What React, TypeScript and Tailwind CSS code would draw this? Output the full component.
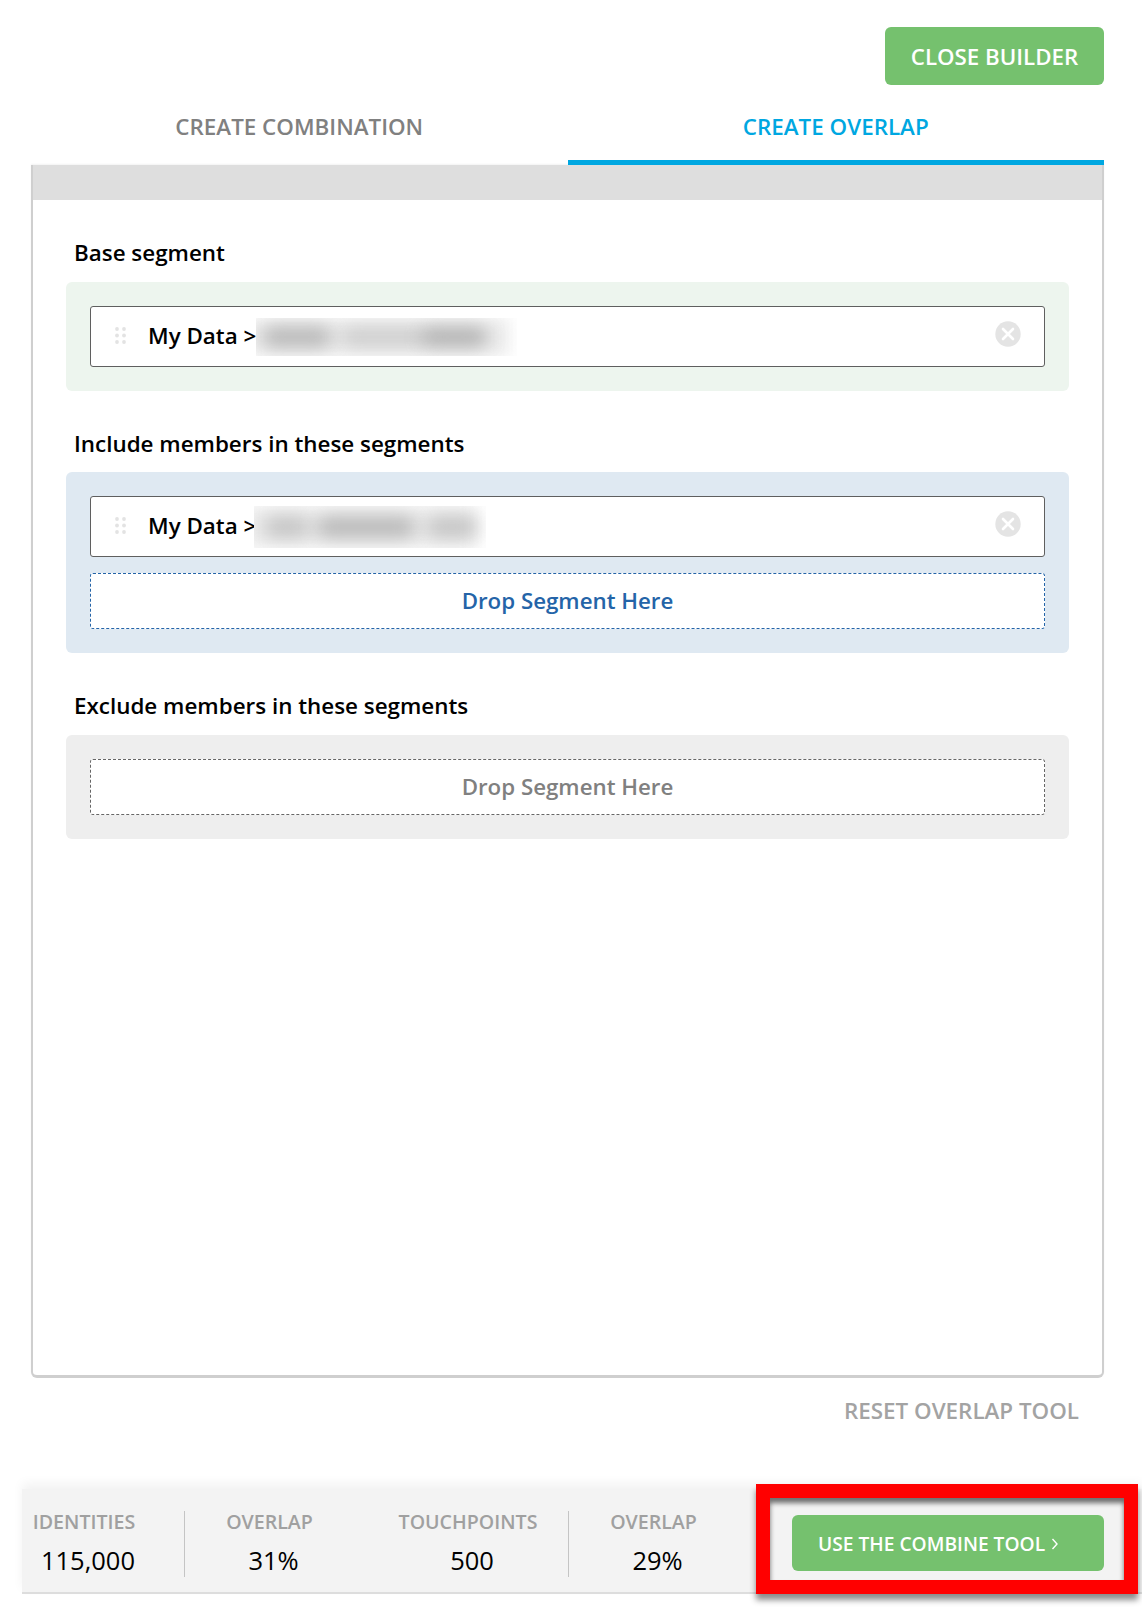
const font = { fontFamily: '"Open Sans", sans-serif' };

function Grip() {
  return (
    <svg width="11" height="17" viewBox="0 0 11 17" className="-mt-[2px] shrink-0" aria-hidden="true">
      {[2, 8.5, 15].map((y) => (
        <g key={y} fill="#e3e3e3">
          <circle cx="2" cy={y} r="1.9" />
          <circle cx="9" cy={y} r="1.9" />
        </g>
      ))}
    </svg>
  );
}

function Clear() {
  return (
    <svg width="26" height="26" viewBox="0 0 26 26" className="shrink-0" aria-hidden="true">
      <circle cx="13" cy="13" r="12.7" fill="#e4e4e4" />
      <path d="M8 8 L18 18 M18 8 L8 18" stroke="#fff" strokeWidth="2.6" strokeLinecap="round" />
    </svg>
  );
}

function Chip({
  blurWidth,
  blurHeight,
  shift,
  blobs,
}: {
  blurWidth: number;
  blurHeight: number;
  shift: number;
  blobs: [number, number, number][];
}) {
  return (
    <div className="flex h-[61px] items-center rounded-[3px] border border-[#5f5f5f] bg-white pl-[24px] pr-[23px]">
      <Grip />
      <span className="-mt-[1px] ml-[22px] whitespace-nowrap text-[22.4px] font-semibold text-black">My Data &gt;</span>
      <div
        className="relative shrink-0 overflow-hidden bg-white"
        style={{ width: blurWidth, height: blurHeight, marginLeft: shift }}
      >
        <div className="absolute inset-y-0 left-[-10px] right-[8px] bg-[#ebebeb] blur-[8px]" />
        {blobs.map(([x, w, o], i) => (
          <div
            key={i}
            className="absolute top-1/2 h-[20px] -translate-y-1/2 rounded-full bg-[#8a8a8a] blur-[9px]"
            style={{ left: x, width: w, opacity: o }}
          />
        ))}
      </div>
      <div className="-mt-[5px] ml-auto">
        <Clear />
      </div>
    </div>
  );
}

function Drop({ tone }: { tone: 'blue' | 'gray' }) {
  return (
    <div
      className={
        tone === 'blue'
          ? 'flex h-[56px] items-center justify-center rounded-[3px] border border-dashed border-[#2464a8] bg-white text-[22.3px] font-semibold text-[#2464a8]'
          : 'flex h-[56px] items-center justify-center rounded-[3px] border border-dashed border-[#666666] bg-white text-[22.3px] font-semibold text-[#808080]'
      }
    >
      Drop Segment Here
    </div>
  );
}

function Stat({ label, value, className }: { label: string; value: string; className: string }) {
  return (
    <div className={'flex h-[66px] flex-col items-center ' + className}>
      <div className="whitespace-nowrap text-[19.6px] font-semibold leading-[22px] text-[#a0a0a0]">{label}</div>
      <div className="mt-[13px] pl-[8px] text-[25.5px] leading-[28px] text-black">{value}</div>
    </div>
  );
}

function Heading({ children, className }: { children: string; className: string }) {
  return <div className={'pl-[8px] text-[22.4px] font-semibold leading-[36px] text-black ' + className}>{children}</div>;
}

export default function App() {
  return (
    <div style={font} className="relative h-[1616px] w-[1142px] overflow-hidden bg-white">
      <div className="flex justify-end pr-[38px] pt-[27px]">
        <button className="h-[58px] w-[219px] rounded-[6px] bg-[#75c16e] pt-[2px] text-[22.3px] font-semibold text-white">
          CLOSE BUILDER
        </button>
      </div>

      <div className="ml-[31px] mr-[38px] grid h-[80px] grid-cols-2 text-[22.4px] font-semibold">
        <div className="flex items-center justify-center pt-[3px] text-[#808080]">CREATE COMBINATION</div>
        <div className="flex items-center justify-center border-b-[5px] border-[#00a7e1] pt-[8px] text-[#00a7e1]">
          CREATE OVERLAP
        </div>
      </div>

      <div className="ml-[31px] mr-[38px] h-[1213px] overflow-hidden rounded-b-[6px] border-x-[2px] border-b-[3px] border-[#cfcfcf] shadow-[0_-1px_2px_rgba(0,0,0,0.05)]">
        <div className="h-[35px] bg-[#dedede]" />
        <div className="pl-[33px] pr-[33px]">
          <Heading className="pt-[35px]">Base segment</Heading>
          <div className="mt-[11px] rounded-[6px] bg-[#edf5ee] px-[24px] py-[24px]">
            <Chip
              blurWidth={261}
              blurHeight={38}
              shift={0}
              blobs={[[6, 70, 0.55], [84, 90, 0.3], [166, 66, 0.6]]}
            />
          </div>

          <Heading className="pt-[35px]">Include members in these segments</Heading>
          <div className="mt-[10px] rounded-[6px] bg-[#dfe9f2] px-[24px] py-[24px]">
            <Chip
              blurWidth={232}
              blurHeight={42}
              shift={-2}
              blobs={[[10, 46, 0.42], [62, 100, 0.55], [172, 52, 0.42]]}
            />
            <div className="mt-[16px]">
              <Drop tone="blue" />
            </div>
          </div>

          <Heading className="pt-[35px]">Exclude members in these segments</Heading>
          <div className="mt-[11px] rounded-[6px] bg-[#eeeeee] px-[24px] py-[24px]">
            <Drop tone="gray" />
          </div>
        </div>
      </div>

      <div className="mr-[63px] mt-[17px] h-[32px] text-right text-[22.4px] font-semibold leading-[32px] text-[#a3a3a3]">
        RESET OVERLAP TOOL
      </div>

      <div className="ml-[22px] mt-[62px] flex h-[105px] items-center border-b-[2px] border-[#dddddd] bg-[#f3f3f3] pt-[6px] shadow-[0_-6px_10px_rgba(0,0,0,0.05)]">
        <Stat label="IDENTITIES" value="115,000" className="ml-0 mr-[38px] w-[124px]" />
        <Stat label="OVERLAP" value="31%" className="mr-[14px] w-[170px] border-l border-[#c4c4c4]" />
        <Stat label="TOUCHPOINTS" value="500" className="w-[200px]" />
        <Stat label="OVERLAP" value="29%" className="w-[170px] border-l border-[#c4c4c4]" />
        <button className="-mt-[2px] ml-[54px] flex h-[56px] w-[312px] items-center gap-[6px] rounded-[6px] bg-[#75c16e] pl-[26px] pt-[3px] text-[19.2px] font-semibold text-white">
          USE THE COMBINE TOOL
          <svg width="8" height="14" viewBox="0 0 8 14" aria-hidden="true">
            <path d="M1.5 2 L6 7 L1.5 12" fill="none" stroke="#fff" strokeWidth="1.4" />
          </svg>
        </button>
      </div>

      <div className="absolute left-[756px] top-[1484px] h-[110px] w-[382px] border-[14px] border-[#ff0000] shadow-[0_6px_6px_rgba(0,0,0,0.45),inset_0_5px_5px_rgba(0,0,0,0.55)]" />
    </div>
  );
}
